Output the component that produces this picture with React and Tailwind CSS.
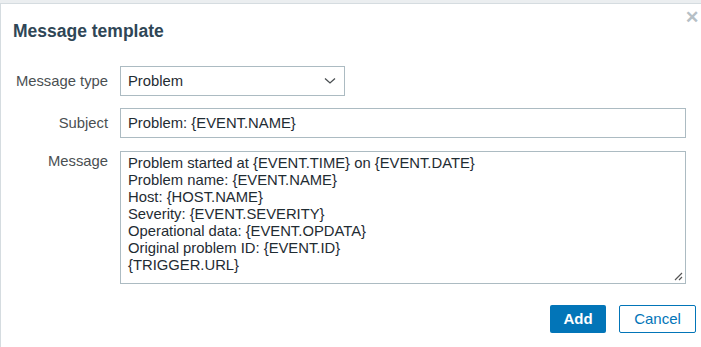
import React from 'react';

const fieldCls =
  'border border-[#acbbc2] bg-white text-[14.8px] text-[#1f2c33] px-[7px]';

const messageText = `Problem started at {EVENT.TIME} on {EVENT.DATE}
Problem name: {EVENT.NAME}
Host: {HOST.NAME}
Severity: {EVENT.SEVERITY}
Operational data: {EVENT.OPDATA}
Original problem ID: {EVENT.ID}
{TRIGGER.URL}`;

const Row = ({ label, top, children }) => (
  <div className="flex items-start">
    <div
      className={`w-[107px] shrink-0 text-right text-[14.8px] text-[#4a4f52] ${top ? 'pt-[3px] leading-[17px]' : 'h-[30px] leading-[30px]'}`}
    >
      {label}
    </div>
    <div className="ml-[12px] flex-1">{children}</div>
  </div>
);

export default function App() {
  return (
    <div
      className="w-[701px] h-[347px] overflow-hidden bg-white flex flex-col"
      style={{ fontFamily: '"Liberation Sans", Arial, sans-serif' }}
    >
      {/* top band */}
      <div className="h-[4px] bg-[#ebeef0] border-b border-[#d5dce0] shrink-0" />

      {/* dialog */}
      <div className="flex-1 border-l border-[#d5dce0] relative">
        <button className="absolute right-[2px] top-[5px] text-[#b6c0c6] text-[17px] font-bold leading-none">
          ✕
        </button>

        <h2 className="pl-[12px] pt-[17px] text-[17.5px] font-bold text-[#2f4656] leading-[20px]">
          Message template
        </h2>

        <div className="mt-[25px] pr-[15px] flex flex-col gap-[12px]">
          <Row label="Message type">
            <div className={`${fieldCls} w-[225px] h-[30px] flex items-center justify-between`}>
              <span>Problem</span>
              <svg width="12" height="8" viewBox="0 0 12 8" className="mr-[1px]">
                <path d="M1 1.5 L6 6 L11 1.5" fill="none" stroke="#4a4f52" strokeWidth="1.3" />
              </svg>
            </div>
          </Row>

          <Row label="Subject">
            <div className={`${fieldCls} h-[30px] flex items-center`}>Problem: {'{EVENT.NAME}'}</div>
          </Row>

          <Row label="Message" top>
            <div className={`${fieldCls} h-[133px] pt-[3px] relative mt-[1px]`}>
              <div className="whitespace-pre leading-[17px]">{messageText}</div>
              <svg
                width="10"
                height="10"
                viewBox="0 0 10 10"
                className="absolute right-[2px] bottom-[2px]"
              >
                <path d="M9 2 L2 9 M9 6 L6 9" stroke="#555" strokeWidth="1.2" />
              </svg>
            </div>
          </Row>
        </div>

        <div className="mt-[21px] flex justify-end gap-[13px] pr-[5px]">
          <button className="w-[56px] h-[28px] rounded-[2px] bg-[#0275b8] text-white text-[15px] font-bold">
            Add
          </button>
          <button className="w-[77px] h-[28px] rounded-[2px] border border-[#0275b8] bg-white text-[#0275b8] text-[15px]">
            Cancel
          </button>
        </div>
      </div>
    </div>
  );
}
